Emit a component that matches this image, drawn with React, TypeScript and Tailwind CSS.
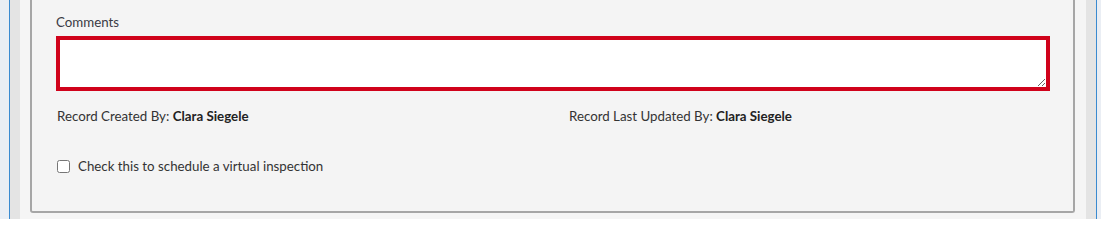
import React from "react";

function InfoRow({ label, name }: { label: string; name: string }) {
  return (
    <div className="leading-[18px]">
      {label} <span className="font-bold text-[#222]">{name}</span>
    </div>
  );
}

export default function App() {
  return (
    <div
      className="h-[219px] w-[1101px] overflow-hidden bg-[#eaeef4] pl-[9px] pr-[4px] text-[13.3px] text-[#333]"
      style={{ fontFamily: "Lato, 'Noto Sans', sans-serif" }}
    >
      <div className="flex h-[219px] border-x border-[#3a8ad0]">
        <div className="w-[10px] shrink-0 bg-[#e4e4e4]" />
        <div className="flex-1 bg-[#f5f5f5] pl-[10px] pr-[11px] pb-[6px]">
          <div className="flex h-[213px] flex-col rounded-b-[3px] border-2 border-t-0 border-[#a6a6a6] bg-[#f4f4f4] pl-[24px] pr-[23px] pt-[13px]">
            <label htmlFor="comments" className="block leading-[18px] text-[#3a3a44]">
              Comments
            </label>
            <textarea
              id="comments"
              className="mt-[5px] block h-[55px] w-full rounded-none border-4 border-[#d0021b] bg-white px-2 py-1 outline-none"
            />
            <div className="mt-[16px] grid grid-cols-[512px_1fr] pl-px">
              <InfoRow label="Record Created By:" name="Clara Siegele" />
              <InfoRow label="Record Last Updated By:" name="Clara Siegele" />
            </div>
            <label className="mt-[32px] flex items-center gap-[8px] pl-px leading-[18px]">
              <input type="checkbox" className="m-0 h-[13px] w-[13px]" />
              <span>Check this to schedule a virtual inspection</span>
            </label>
          </div>
        </div>
        <div className="w-[10px] shrink-0 bg-[#e4e4e4]" />
      </div>
    </div>
  );
}
